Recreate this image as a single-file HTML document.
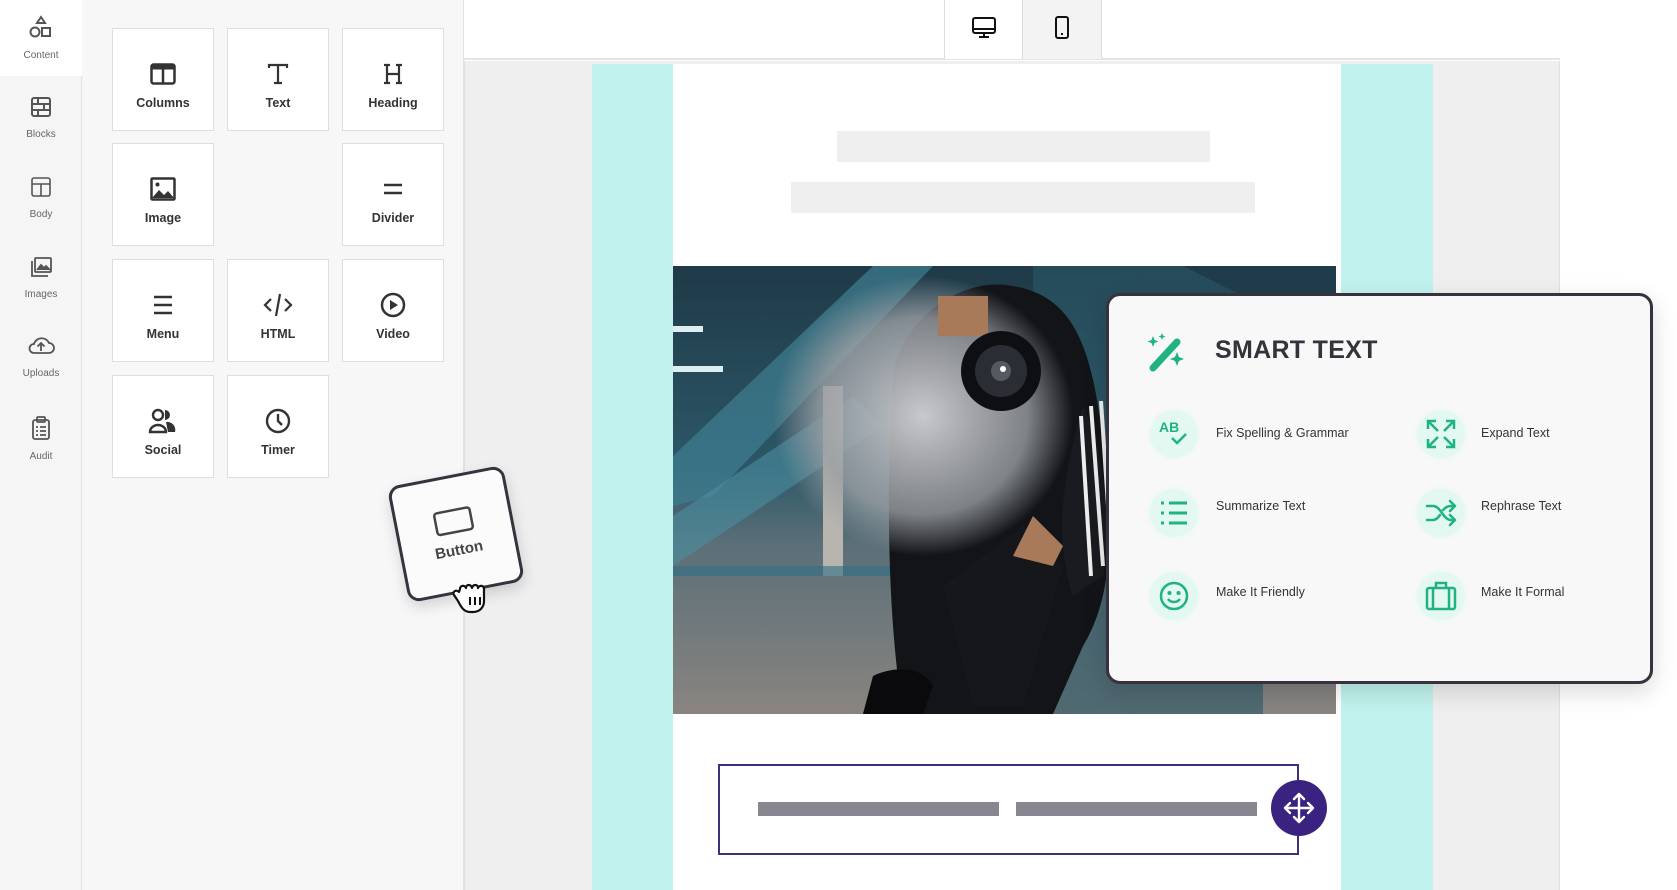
<!DOCTYPE html>
<html><head><meta charset="utf-8"><style>
*{margin:0;padding:0;box-sizing:border-box}
body{width:1677px;height:890px;overflow:hidden;background:#fff;font-family:"Liberation Sans",sans-serif;position:relative}
.abs{position:absolute}
#side{left:0;top:0;width:82px;height:890px;background:#f5f5f5;border-right:1px solid #e2e2e2}
.si{position:absolute;left:0;width:82px;text-align:center;font-size:10px;color:#666}
.si svg{display:block;margin:0 auto 10px}
#panel{left:82px;top:0;width:382px;height:890px;background:#f7f7f7;border-right:1px solid #e2e2e2}
.tile{position:absolute;width:102px;height:103px;background:#fff;border:1.5px solid #dedede;text-align:center;font-size:12.5px;font-weight:bold;color:#333}
.tile .i{height:26px;margin:32px auto 9px;display:flex;align-items:center;justify-content:center}
.pop-item{position:absolute;font-size:12.5px;color:#333}
.ic{position:absolute;width:48px;height:48px;border-radius:50%;background:#e3f8f1;box-shadow:0 0 6px #e3f8f1}
.ic svg{position:absolute;left:8px;top:8px}
</style></head><body>
<div id="side" class="abs">
 <div class="abs" style="left:0;top:0;width:82px;height:76px;background:#fff"></div>
 <div class="si" style="top:14px"><svg width="26" height="26" viewBox="0 0 26 26" fill="none" stroke="#555" stroke-width="2"><path d="M13 3l4 6h-8z"/><circle cx="7" cy="18" r="4.5"/><rect x="14" y="14" width="8" height="8"/></svg>Content</div>
 <div class="si" style="top:95px"><svg width="24" height="24" viewBox="0 0 24 24" fill="none" stroke="#555" stroke-width="2"><rect x="3" y="3" width="18" height="18" rx="2"/><path d="M3 9h18M3 15h18M9 3v6M15 9v6M9 15v6"/></svg>Blocks</div>
 <div class="si" style="top:175px"><svg width="24" height="24" viewBox="0 0 24 24" fill="none" stroke="#555" stroke-width="1.6"><rect x="3" y="3" width="18" height="18" rx="2"/><path d="M3 9h18M12 9v12"/></svg>Body</div>
 <div class="si" style="top:255px"><svg width="24" height="24" viewBox="0 0 24 24" fill="none" stroke="#555" stroke-width="1.8"><rect x="6" y="3" width="16" height="14" rx="1"/><path d="M3 6v15h16"/><path d="M8 15l4-5 3 3 2-2 4 4" fill="#555"/></svg>Images</div>
 <div class="si" style="top:334px"><svg width="28" height="24" viewBox="0 0 28 24" fill="none" stroke="#555" stroke-width="1.8"><path d="M7 19h15a5 5 0 0 0 0-10 8 8 0 0 0-15 1 4.5 4.5 0 0 0 0 9z"/><path d="M14 17v-8M10.5 12.5L14 9l3.5 3.5"/></svg>Uploads</div>
 <div class="si" style="top:415px"><svg width="22" height="26" viewBox="0 0 22 26" fill="none" stroke="#555" stroke-width="1.8"><rect x="3" y="5" width="16" height="19" rx="2"/><rect x="7" y="2" width="8" height="5" rx="1"/><path d="M6 12h2M10 12h6M6 16h2M10 16h6M6 20h2M10 20h6"/></svg>Audit</div>
</div>
<div class="abs" style="left:80px;top:32px;width:0;height:0;border-top:6px solid transparent;border-bottom:6px solid transparent;border-left:6px solid #fff"></div>
<div id="panel" class="abs">
 <div class="tile" style="left:30px;top:28px"><div class="i"><svg width="26" height="22" viewBox="0 0 26 22"><rect x="1.5" y="1.5" width="23" height="19" rx="2" fill="none" stroke="#333" stroke-width="2.5"/><rect x="1.5" y="1.5" width="23" height="5" fill="#333"/><path d="M13 6v14" stroke="#333" stroke-width="2.5"/></svg></div>Columns</div>
 <div class="tile" style="left:145px;top:28px"><div class="i"><svg width="24" height="24" viewBox="0 0 24 24" fill="none" stroke="#333" stroke-width="2.2"><path d="M3 6V3h18v3M12 3v18M8 21h8"/></svg></div>Text</div>
 <div class="tile" style="left:260px;top:28px"><div class="i"><svg width="24" height="24" viewBox="0 0 24 24" fill="none" stroke="#333" stroke-width="2.2"><path d="M6 3v18M18 3v18M6 12h12M3 3h6M15 3h6M3 21h6M15 21h6"/></svg></div>Heading</div>
 <div class="tile" style="left:30px;top:143px"><div class="i"><svg width="26" height="24" viewBox="0 0 26 24"><rect x="1.5" y="1.5" width="23" height="21" rx="1" fill="none" stroke="#333" stroke-width="2.5"/><circle cx="7.5" cy="7.5" r="2" fill="#333"/><path d="M2 21l7-8 5 5 4-4 6 7z" fill="#333"/></svg></div>Image</div>
 <div class="tile" style="left:260px;top:143px"><div class="i"><svg width="22" height="24" viewBox="0 0 22 24" stroke="#333" stroke-width="2.4"><path d="M2 8h18M2 16h18"/></svg></div>Divider</div>
 <div class="tile" style="left:30px;top:259px"><div class="i"><svg width="22" height="24" viewBox="0 0 22 24" stroke="#333" stroke-width="2.4"><path d="M2 4h18M2 12h18M2 20h18"/></svg></div>Menu</div>
 <div class="tile" style="left:145px;top:259px"><div class="i"><svg width="30" height="26" viewBox="0 0 30 26" fill="none" stroke="#333" stroke-width="2.2"><path d="M8 7l-6 6 6 6M22 7l6 6-6 6M17 2l-4 22"/></svg></div>HTML</div>
 <div class="tile" style="left:260px;top:259px"><div class="i"><svg width="26" height="26" viewBox="0 0 26 26"><circle cx="13" cy="13" r="11" fill="none" stroke="#333" stroke-width="2.5"/><path d="M10 8v10l8-5z" fill="#333"/></svg></div>Video</div>
 <div class="tile" style="left:30px;top:375px"><div class="i"><svg width="30" height="26" viewBox="0 0 30 26"><circle cx="10" cy="7" r="5" fill="none" stroke="#333" stroke-width="2.4"/><path d="M17 2a5 5 0 0 1 0 10z" fill="#333"/><path d="M2 24a8 7 0 0 1 16 0z" fill="none" stroke="#333" stroke-width="2.4"/><path d="M18 14a8 8 0 0 1 9 10h-7z" fill="#333"/></svg></div>Social</div>
 <div class="tile" style="left:145px;top:375px"><div class="i"><svg width="26" height="26" viewBox="0 0 26 26" fill="none" stroke="#333" stroke-width="2.4"><circle cx="13" cy="13" r="11"/><path d="M13 6v7l4 4"/></svg></div>Timer</div>
</div>
<!-- main -->
<div class="abs" style="left:464px;top:0;width:1096px;height:60px;background:#fff;border-bottom:2px solid #e4e4e4"></div>
<div class="abs" style="left:944px;top:0;width:79px;height:59px;background:#fff;border-left:1px solid #ddd;border-right:1px solid #ddd"></div>
<div class="abs" style="left:1023px;top:0;width:79px;height:59px;background:#f3f3f3;border-right:1px solid #ddd"></div>
<svg class="abs" style="left:971px;top:17px" width="26" height="22" viewBox="0 0 26 22" fill="none" stroke="#111" stroke-width="2"><rect x="2" y="1" width="22" height="15" rx="2"/><path d="M2 12h22M13 16v4M8 20h10"/></svg>
<svg class="abs" style="left:1053px;top:16px" width="18" height="24" viewBox="0 0 18 24" fill="none" stroke="#111" stroke-width="2"><rect x="3" y="1" width="12" height="21" rx="2"/><path d="M8 18h2"/></svg>
<div class="abs" style="left:464px;top:61px;width:1096px;height:829px;background:#efefef;border-left:1px solid #e0e0e0;border-right:1px solid #e0e0e0"></div>
<div class="abs" style="left:592px;top:64px;width:841px;height:826px;background:#c1f2ed"></div>
<div class="abs" style="left:673px;top:64px;width:668px;height:826px;background:#fff"></div>
<div class="abs" style="left:837px;top:131px;width:373px;height:31px;background:#efefef"></div>
<div class="abs" style="left:791px;top:182px;width:464px;height:31px;background:#efefef"></div>
<!-- photo -->
<svg class="abs" style="left:673px;top:266px" width="663" height="448" viewBox="0 0 663 448">
 <defs>
  <linearGradient id="bg" x1="0" y1="0" x2="0" y2="1"><stop offset="0" stop-color="#1f3a48"/><stop offset=".45" stop-color="#2c5767"/><stop offset=".62" stop-color="#5b6f78"/><stop offset="1" stop-color="#8a8480"/></linearGradient>
  <radialGradient id="sm" cx=".5" cy=".5" r=".5"><stop offset="0" stop-color="#c8c9cc"/><stop offset=".7" stop-color="#9a9ea3" stop-opacity=".8"/><stop offset="1" stop-color="#9a9ea3" stop-opacity="0"/></radialGradient>
 </defs>
 <rect width="663" height="448" fill="url(#bg)"/>
 <path d="M0 190L200 0h60L40 230 0 240z" fill="#3f7f91" opacity=".7"/>
 <path d="M0 250l180-120 30 30-210 140z" fill="#4a8ea0" opacity=".6"/>
 <path d="M0 60h30v6H0zM0 100h50v6H0z" fill="#ddeef2"/>
 <rect x="150" y="120" width="20" height="190" fill="#b7b5ae"/>
 <path d="M0 300h260v10H0z" fill="#2e6e86" opacity=".6"/>
 <path d="M360 0h150l80 40v408H360z" fill="#2c5868" opacity=".6"/>
 <path d="M220 110c10-60 70-100 120-90 60 10 80 60 90 160 10 90 10 150-20 200l-30 68H230c-10-60-20-180-10-338z" fill="#121418"/>
 <ellipse cx="250" cy="150" rx="150" ry="140" fill="url(#sm)"/>
 <path d="M270 320l80-60 40 40-40 140h-50z" fill="#15171b"/>
 <path d="M410 140c20 40 30 120 20 170l-30 20c-20-60-10-120 10-190z" fill="#191b20"/>
 <path d="M408 150l10 160M418 140l12 160M428 135l10 150" stroke="#eee" stroke-width="4"/>
 <path d="M265 30h50v40h-50z" fill="#a87a5a"/>
 <circle cx="328" cy="105" r="40" fill="#0e0f12"/><circle cx="328" cy="105" r="26" fill="#2a2d33"/><circle cx="328" cy="105" r="10" fill="#555a62"/><circle cx="330" cy="103" r="3" fill="#fff"/>
 <path d="M360 250l30 30-10 20-40-10z" fill="#a87a5a"/>
 <path d="M200 410c20-10 50-10 60 10l-10 28h-60z" fill="#0a0a0c"/>
</svg>
<!-- button row -->
<div class="abs" style="left:718px;top:764px;width:581px;height:91px;border:2px solid #3d2f7a;background:#fff"></div>
<div class="abs" style="left:758px;top:802px;width:241px;height:14px;background:#888690"></div>
<div class="abs" style="left:1016px;top:802px;width:241px;height:14px;background:#888690"></div>
<div class="abs" style="left:1271px;top:780px;width:56px;height:56px;border-radius:50%;background:#3a2380"></div>
<svg class="abs" style="left:1279px;top:788px" width="40" height="40" viewBox="0 0 40 40" fill="none" stroke="#fff" stroke-width="2.4" stroke-linecap="round" stroke-linejoin="round"><path d="M20 6v28M6 20h28M15 11l5-5 5 5M15 29l5 5 5-5M11 15l-5 5 5 5M29 15l5 5-5 5"/></svg>
<!-- popup -->
<div class="abs" style="left:1106px;top:293px;width:547px;height:391px;background:#f8f8f9;border:3px solid #37323e;border-radius:14px;box-shadow:0 8px 24px rgba(0,0,0,.15)">
 <svg class="abs" style="left:36px;top:36px" width="42" height="40" viewBox="0 0 42 40"><path d="M8 36l24-26" stroke="#1fb47f" stroke-width="7" stroke-linecap="round"/><path d="M8 4l1.5 4 4 1.5-4 1.5L8 15l-1.5-4-4-1.5 4-1.5zM17 1l1 2.5 2.5 1-2.5 1L17 8l-1-2.5-2.5-1 2.5-1zM32 20l2 5 5 2-5 2-2 5-2-5-5-2 5-2z" fill="#1fb47f"/></svg>
 <div class="abs" style="left:106px;top:40px;font-size:25px;font-weight:bold;color:#35323a;letter-spacing:.3px">SMART TEXT</div>
 <div class="ic" style="left:41px;top:114px"><svg width="32" height="32" viewBox="0 0 32 32"><text x="1" y="14" font-family="Liberation Sans" font-weight="bold" font-size="14" fill="#1fb47f">AB</text><path d="M14 20l5 5 9-9" fill="none" stroke="#1fb47f" stroke-width="2.5"/></svg></div>
 <div class="pop-item" style="left:107px;top:130px">Fix Spelling &amp; Grammar</div>
 <div class="ic" style="left:308px;top:114px"><svg width="32" height="32" viewBox="0 0 32 32" fill="none" stroke="#1fb47f" stroke-width="2.5"><path d="M3 11V3h8M21 3h8v8M29 21v8h-8M11 29H3v-8M4 4l9 9M28 4l-9 9M28 28l-9-9M4 28l9-9"/></svg></div>
 <div class="pop-item" style="left:372px;top:130px">Expand Text</div>
 <div class="ic" style="left:41px;top:193px"><svg width="32" height="32" viewBox="0 0 32 32" stroke="#1fb47f" stroke-width="3"><path d="M3 6h3M3 16h3M3 26h3M11 6h18M11 16h18M11 26h18"/></svg></div>
 <div class="pop-item" style="left:107px;top:203px">Summarize Text</div>
 <div class="ic" style="left:308px;top:193px"><svg width="32" height="32" viewBox="0 0 32 32" fill="none" stroke="#1fb47f" stroke-width="2.5" stroke-linecap="round" stroke-linejoin="round"><path d="M2 9h6c8 0 10 14 18 14h3M2 23h6c3 0 5-2 7-5M18 13c2-2 4-4 8-4h3M25 4l5 5-5 5M25 18l5 5-5 5"/></svg></div>
 <div class="pop-item" style="left:372px;top:203px">Rephrase Text</div>
 <div class="ic" style="left:41px;top:276px"><svg width="32" height="32" viewBox="0 0 32 32" fill="none" stroke="#1fb47f" stroke-width="2.5"><circle cx="16" cy="16" r="13"/><circle cx="11.5" cy="13" r=".8" fill="#1fb47f"/><circle cx="20.5" cy="13" r=".8" fill="#1fb47f"/><path d="M10 19c3 4 9 4 12 0"/></svg></div>
 <div class="pop-item" style="left:107px;top:289px">Make It Friendly</div>
 <div class="ic" style="left:308px;top:276px"><svg width="32" height="32" viewBox="0 0 32 32" fill="none" stroke="#1fb47f" stroke-width="2.5"><rect x="2" y="8" width="28" height="21" rx="2"/><path d="M11 8V3h10v5M8 8v21M24 8v21"/></svg></div>
 <div class="pop-item" style="left:372px;top:289px">Make It Formal</div>
</div>
<!-- dragged button -->
<div class="abs" style="left:397px;top:475px;width:118px;height:118px;background:#fbfbfb;border:3px solid #37323e;border-radius:12px;transform:rotate(-11deg);box-shadow:0 6px 14px rgba(0,0,0,.15);text-align:center">
 <svg style="display:block;margin:30px auto 8px" width="40" height="26" viewBox="0 0 40 26"><rect x="2" y="2" width="36" height="22" rx="3" fill="none" stroke="#444" stroke-width="2.5"/></svg>
 <div style="font-size:15px;font-weight:bold;color:#444">Button</div>
</div>
<svg class="abs" style="left:452px;top:575px" width="42" height="40" viewBox="0 0 42 40"><path d="M8 14c0-4 5-4 6-1 0-4 5-4 6 0 1-4 6-4 6 0 1-3 6-3 6 1v12c0 6-4 11-11 11h-3c-6 0-9-5-12-11l-4-6c-2-3 2-6 5-3z" fill="#fff" stroke="#111" stroke-width="2.2" stroke-linejoin="round"/><path d="M18 22v8M23 22v8M28 22v8" stroke="#111" stroke-width="2"/></svg>
</body></html>
